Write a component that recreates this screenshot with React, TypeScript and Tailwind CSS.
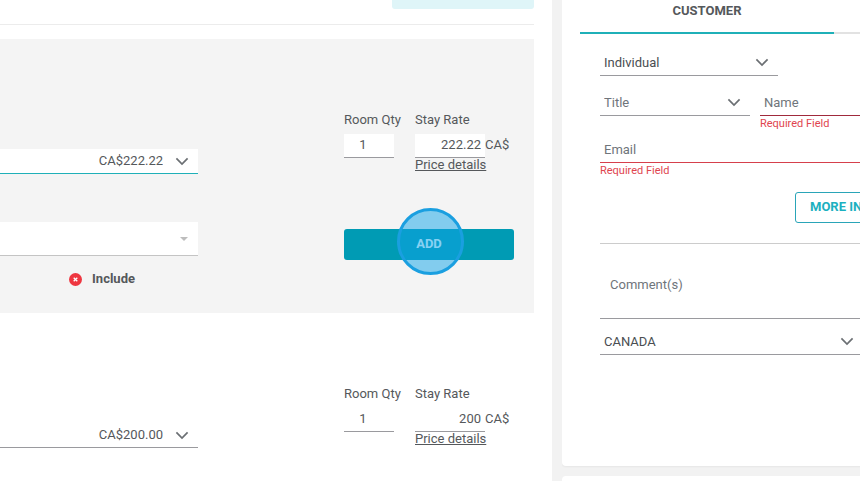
// src/App.tsx
import React from "react";

const Chevron: React.FC = () => (
  <svg
    viewBox="0 0 14 9"
    className="pointer-events-none absolute top-2 right-[9px] h-[9px] w-[14px]"
    fill="none"
    stroke="#6b6f73"
    strokeWidth="1.7"
  >
    <path d="M1.4 1.4 7 7l5.6-5.6" />
  </svg>
);

type SelectProps = {
  label: string;
  value: string;
  className: string;
  muted?: boolean;
};

const FormSelect: React.FC<SelectProps> = ({ label, value, className, muted }) => (
  <div className={`relative ${className}`}>
    <select
      aria-label={label}
      className={`block h-[26px] w-full appearance-none border-b border-[#9a9a9e] bg-white pr-8 pl-1 outline-none ${
        muted ? "text-[#6f757b]" : "text-[#4a4e52]"
      }`}
    >
      <option>{value}</option>
    </select>
    <Chevron />
  </div>
);

const RequiredInput: React.FC<{ id: string; label: string; border: string }> = ({
  id,
  label,
  border,
}) => (
  <div className="flex-1">
    <input
      id={id}
      aria-label={label}
      placeholder={label}
      className={`block h-[26px] w-full border-b bg-white px-1 outline-none placeholder:text-[#6f757b] ${border}`}
    />
    <p className="text-[11px] leading-4 text-[#e0454f]">Required Field</p>
  </div>
);

type RoomProps = {
  id: string;
  total: string;
  rate: string;
  active?: boolean;
};

const RoomRow: React.FC<RoomProps> = ({ id, total, rate, active }) => (
  <section
    className={`flex h-[274px] justify-between pr-5 ${active ? "bg-[#f4f4f4]" : "bg-white"}`}
  >
    <div className="w-[198px] pt-[110px]">
      <div className="relative">
        <select
          aria-label="Rate"
          className={`block h-[25px] w-full appearance-none border-b bg-white pr-[35px] text-right outline-none [text-align-last:right] ${
            active ? "border-[#1fb0b8]" : "border-[#9a9a9e]"
          }`}
        >
          <option>{total}</option>
        </select>
        <Chevron />
      </div>
      {active && (
        <>
          <div className="relative mt-12">
            <select
              aria-label="Extras"
              className="block h-[34px] w-full appearance-none border-b border-[#c4c4c4] bg-white outline-none"
            >
              <option></option>
            </select>
            <svg
              viewBox="0 0 8 4"
              className="pointer-events-none absolute top-[15px] right-[10px] h-1 w-2"
              fill="#bdbdbd"
            >
              <path d="M0 0h8L4 4z" />
            </svg>
          </div>
          <div className="mt-3 flex items-center justify-end gap-[10px] pr-[63px] leading-[22px]">
            <svg viewBox="0 0 13 13" className="size-[13px]">
              <circle cx="6.5" cy="6.5" r="6.5" fill="#ee3640" />
              <path d="m4.7 4.7 3.6 3.6m0-3.6L4.7 8.3" stroke="#fff" strokeWidth="1.3" />
            </svg>
            <span className="font-bold">Include</span>
          </div>
        </>
      )}
    </div>

    <div className="w-[170px] pt-[70px]">
      <div className="grid grid-cols-[71px_1fr]">
        <div>
          <label htmlFor={`${id}-qty`} className="block leading-[22px] whitespace-nowrap">
            Room Qty
          </label>
          <input
            id={`${id}-qty`}
            defaultValue="1"
            className="mt-[3px] block h-6 w-[50px] border-b border-[#9a9a9e] bg-white pr-3 pb-[2px] text-center outline-none"
          />
        </div>
        <div>
          <label htmlFor={`${id}-rate`} className="block leading-[22px]">
            Stay Rate
          </label>
          <div className="mt-[3px] flex">
            <input
              id={`${id}-rate`}
              defaultValue={rate}
              className="block h-6 w-[70px] border-b border-[#9a9a9e] bg-white pr-1 pb-[2px] text-right outline-none"
            />
            <span className="leading-[22px]">CA$</span>
          </div>
          <a href="#price" className="block leading-[14px] underline">
            Price details
          </a>
        </div>
      </div>
      {active && (
        <div className="relative mt-[57px]">
          <button className="block h-[31px] w-full rounded-[3px] bg-[#009bb4] pb-[2px] font-bold text-white">
            ADD
          </button>
          <span className="pointer-events-none absolute -top-[21px] left-[53px] size-[67px] rounded-full border-[3px] border-[#1a9fe0] bg-[#10a4e8]/50" />
        </div>
      )}
    </div>
  </section>
);

const CustomerPanel: React.FC = () => (
  <div className="h-[466px] w-[544px] rounded-b bg-white px-[18px] shadow-xs">
    <div className="flex">
      <button className="h-[34px] flex-1 border-b-2 border-[#1fb0b8] pb-[10px] font-bold">
        CUSTOMER
      </button>
      <span className="h-[34px] flex-1 border-b-2 border-[#e2e2e2]" />
    </div>
    <form className="px-5 pt-4">
      <FormSelect label="Customer type" value="Individual" className="w-[178px]" />
      <div className="mt-[14px] flex gap-[10px]">
        <FormSelect label="Title" value="Title" className="w-[150px]" muted />
        <RequiredInput id="name" label="Name" border="border-[#a02a3c]" />
      </div>
      <div className="mt-[5px] flex">
        <RequiredInput id="email" label="Email" border="border-[#d6404c]" />
      </div>
      <button
        type="button"
        className="mt-[13px] ml-[195px] block h-[31px] rounded-[3px] border border-[#2aa5b8] px-[14px] pb-[2px] font-bold text-[#1bb0c0]"
      >
        MORE INFO
      </button>
      <hr className="mt-5 border-[#cccccc]" />
      <textarea
        aria-label="Comment(s)"
        placeholder="Comment(s)"
        className="mt-[25px] block h-[50px] w-full resize-none border-b border-[#9a9a9e] px-[10px] pt-[5px] leading-[22px] outline-none placeholder:text-[#6f757b]"
      />
      <FormSelect label="Country" value="CANADA" className="mt-[10px] w-[263px]" />
    </form>
  </div>
);

const App: React.FC = () => {
  return (
    <div className="flex h-screen gap-[10px] overflow-hidden bg-[#f2f2f2] font-[Roboto,sans-serif] text-[13px] text-[#55585b]">
      <main className="min-w-0 flex-1 bg-white pr-[18px]">
        <div className="flex justify-end border-b border-[#ececec] pb-[15px]">
          <button aria-label="Options" className="h-[9px] w-[142px] rounded-b-[3px] bg-[#dff5f8]" />
        </div>
        <div className="pt-[14px]">
          <RoomRow id="first" total="CA$222.22" rate="222.22" active />
          <RoomRow id="second" total="CA$200.00" rate="200" />
        </div>
      </main>
      <aside className="flex w-[298px] shrink-0 flex-col gap-[10px] overflow-hidden">
        <CustomerPanel />
        <div className="flex-1 rounded-tl bg-white" />
      </aside>
    </div>
  );
};

export default App;
